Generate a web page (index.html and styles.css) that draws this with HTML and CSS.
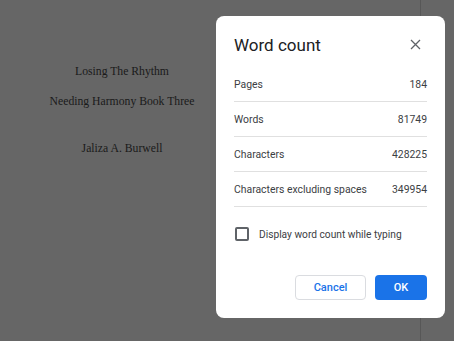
FILE: index.html
```html
<!DOCTYPE html>
<html lang="en">
<head>
  <meta charset="UTF-8">
  <meta name="viewport" content="width=device-width, initial-scale=1.0">
  <title>Word count</title>
  <link rel="stylesheet" href="styles.css">
</head>
<body>
  <div class="editor">
    <div class="page">
      <div class="title-page">
        <p class="line">Losing The Rhythm</p>
        <p class="line">Needing Harmony Book Three</p>
        <p class="line author">Jaliza A. Burwell</p>
      </div>
    </div>
  </div>

  <!-- word count dialog -->
  <div class="dialog">
    <div class="dialog-head">
      <h2>Word count</h2>
      <button class="close" aria-label="Close">
        <svg width="11" height="11" viewBox="0 0 11 11"><path d="M1 1L10 10M10 1L1 10" stroke="#5f6368" stroke-width="1.3"/></svg>
      </button>
    </div>
    <ul class="stats">
      <li><span>Pages</span><span>184</span></li>
      <li><span>Words</span><span>81749</span></li>
      <li><span>Characters</span><span>428225</span></li>
      <li><span>Characters excluding spaces</span><span>349954</span></li>
    </ul>
    <label class="check"><span class="box"></span>Display word count while typing</label>
    <div class="actions">
      <button class="btn cancel">Cancel</button>
      <button class="btn ok">OK</button>
    </div>
  </div>
</body>
</html>
```

FILE: styles.css
```css
body {
  margin: 0;
  background-color: #666;
  font-family: Roboto, Arial, sans-serif;
  overflow: hidden;
}
.editor {
  height: 341px;
  display: flex;
}
.page {
  width: 420px;
  border-right: 1px solid #575757;
}
.title-page {
  width: 244px;
  padding-top: 65px;
  text-align: center;
  font-family: "Liberation Serif", "Times New Roman", serif;
  font-size: 11.7px;
  color: #1a1a1a;
}
.line { margin: 0 0 16px; line-height: 14px; }
.author { margin-top: 33px; }

.dialog {
  position: absolute;
  left: 216px;
  top: 16px;
  width: 229px;
  height: 302px;
  box-sizing: border-box;
  padding: 0 18px 18px;
  background: #fff;
  border-radius: 8px;
  display: flex;
  flex-direction: column;
}
.dialog-head {
  display: flex;
  justify-content: space-between;
  align-items: center;
  height: 56px;
}
.dialog-head h2 {
  margin: 0;
  padding-top: 1px;
  font-family: Roboto, Arial, sans-serif;
  font-size: 17px;
  font-weight: 400;
  color: #202124;
}
.close {
  border: none;
  background: none;
  padding: 0;
  margin-right: 6px;
  width: 11px;
  height: 11px;
  display: flex;
}
.stats {
  list-style: none;
  margin: 0;
  padding: 0;
}
.stats li {
  display: flex;
  justify-content: space-between;
  align-items: center;
  height: 35px;
  border-bottom: 1px solid #e0e0e0;
  font-size: 10.4px;
  color: #3c4043;
  white-space: nowrap;
  box-sizing: border-box;
  padding-top: 1px;
}
.stats li:first-child { height: 30px; padding: 0 0 4px; }
.check {
  display: flex;
  align-items: center;
  gap: 10px;
  margin-top: 20px;
  font-size: 10.2px;
  color: #3c4043;
}
.box {
  width: 10px;
  height: 10px;
  border: 2px solid #5f6368;
  border-radius: 2px;
  margin-left: 1px;
}
.actions {
  margin-top: auto;
  display: flex;
  justify-content: flex-end;
  gap: 9px;
}
.btn {
  height: 25px;
  border-radius: 4px;
  font-family: Roboto, Arial, sans-serif;
  font-size: 11px;
  font-weight: 500;
  cursor: pointer;
}
.cancel {
  width: 71px;
  background: #fff;
  color: #1a73e8;
  border: 1px solid #dadce0;
}
.ok {
  width: 52px;
  background: #1a73e8;
  color: #fff;
  border: none;
}
```
